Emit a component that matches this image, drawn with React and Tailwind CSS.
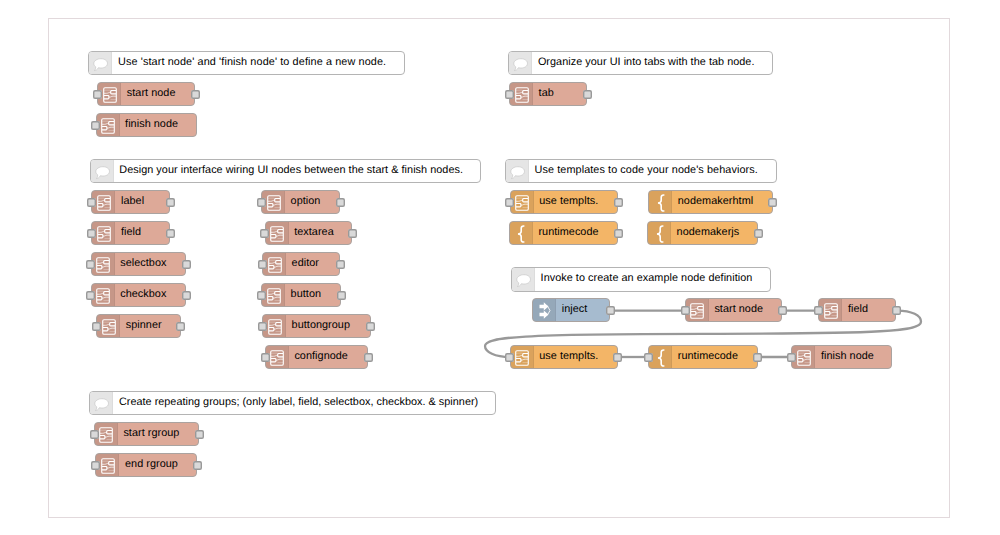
import React from "react";

const COMMENTS = [
  { x: 88.4, r: 405, y: 51, text: "Use 'start node' and 'finish node' to define a new node.", tracking: "tracking-[0.11px]" },
  { x: 508.3, r: 773.2, y: 51, text: "Organize your UI into tabs with the tab node." },
  { x: 89.7, r: 480.8, y: 159.3, text: "Design your interface wiring UI nodes between the start & finish nodes." },
  { x: 505, r: 776.5, y: 159.3, text: "Use templates to code your node's behaviors.", tracking: "tracking-[0.08px]" },
  { x: 511, r: 770.7, y: 267.4, text: "Invoke to create an example node definition" },
  { x: 89.3, r: 496.5, y: 391, text: "Create repeating groups; (only label, field, selectbox, checkbox. & spinner)", tracking: "tracking-[0.025px]" },
];

const NODES = [
  { x: 97.2, r: 195, y: 82, text: "start node", input: true, output: true },
  { x: 95.5, r: 196.8, y: 113, text: "finish node", input: true },
  { x: 91.4, r: 170, y: 190.2, text: "label", input: true, output: true },
  { x: 91.4, r: 170, y: 221.2, text: "field", input: true, output: true },
  { x: 90.6, r: 186.2, y: 252.2, text: "selectbox", input: true, output: true },
  { x: 90.6, r: 186.4, y: 283.2, text: "checkbox", input: true, output: true },
  { x: 96.2, r: 180.6, y: 314, text: "spinner", input: true, output: true },
  { x: 261, r: 340.4, y: 190.2, text: "option", input: true, output: true },
  { x: 264.6, r: 352.2, y: 221.2, text: "textarea", input: true, output: true },
  { x: 262, r: 340, y: 252.2, text: "editor", input: true, output: true },
  { x: 261, r: 341, y: 283.2, text: "button", input: true, output: true },
  { x: 262, r: 370.5, y: 314, text: "buttongroup", input: true, output: true },
  { x: 264.8, r: 367.8, y: 345, text: "confignode", input: true, output: true },
  { x: 93.8, r: 198.8, y: 422, text: "start rgroup", input: true, output: true },
  { x: 95.4, r: 197.2, y: 453, text: "end rgroup", input: true, output: true },
  { x: 509, r: 587.2, y: 82, text: "tab", input: true, output: true },
  { x: 509.6, r: 617.8, y: 190.2, text: "use templts.", color: "orange", input: true, output: true },
  { x: 508.8, r: 618.4, y: 221.2, text: "runtimecode", color: "orange", icon: "brace", output: true },
  { x: 648.2, r: 772.6, y: 190.2, text: "nodemakerhtml", color: "orange", icon: "brace", output: true },
  { x: 647, r: 758, y: 221.2, text: "nodemakerjs", color: "orange", icon: "brace", output: true },
  { x: 532.2, r: 610.4, y: 298.3, text: "inject", color: "blue", icon: "arrow", output: true },
  { x: 684.8, r: 782.4, y: 298.3, text: "start node", input: true, output: true },
  { x: 818.3, r: 896.3, y: 298.3, text: "field", input: true, output: true },
  { x: 509.6, r: 617.6, y: 345, text: "use templts.", color: "orange", input: true, output: true },
  { x: 648.2, r: 757.6, y: 345, text: "runtimecode", color: "orange", icon: "brace", input: true, output: true },
  { x: 791.3, r: 892.4, y: 345, text: "finish node", input: true },
];

const WIRES = [
  "M610.5 310.6H685",
  "M782.5 310.6H818",
  "M617.5 357H648",
  "M757.5 357H791",
  "M897 310.6C912 310.6 921 315.5 921 321.7C921 331 885 333.8 703 333.8C521 333.8 485 337 485 346C485 352 495 357 510 357",
];

const FILLS = {
  pink: "bg-[#dda998]",
  orange: "bg-[#f3b567]",
  blue: "bg-[#a6bbcf]",
};

function SubflowIcon() {
  return (
    <svg className="h-4 w-3.5" viewBox="0 0 14 16" fill="none" stroke="white">
      <rect x="0.7" y="0.7" width="12.6" height="14.6" rx="1.3" strokeWidth="1.1" />
      <path d="M1 3.2H7M7.5 12.6H13" strokeWidth="0.7" opacity="0.4" />
      <path
        d="M13 3.5H8.6Q7.7 3.5 7.7 4.4V6Q7.7 6.9 8.6 6.9H13M1 8.5H5Q5.9 8.5 5.9 9.4V11Q5.9 11.9 5 11.9H1"
        strokeWidth="1.15"
      />
      <path d="M7.7 5.3C5.4 5.3 5.4 6.3 3.4 6.3H1M5.9 10.2C8.2 10.2 8.2 9.2 10.2 9.2H13" strokeWidth="0.9" opacity="0.8" />
    </svg>
  );
}

function BraceIcon() {
  return (
    <svg className="h-[18px] w-2.5" viewBox="0 0 10 18" fill="none" stroke="white" strokeWidth="1.6">
      <path d="M8.4 1H7.6Q5.2 1 5.2 3.3V6.2Q5.2 8.8 2 9Q5.2 9.2 5.2 11.8V14.7Q5.2 17 7.6 17H8.4" />
    </svg>
  );
}

function ArrowIcon() {
  return (
    <svg className="ml-px h-[17px] w-3" viewBox="0 0 12 17" fill="white">
      <path d="M0.5 2.7H4.8V0.3L9.4 4.5L4.8 8.6V6.3H0.5Z" />
      <path d="M0.5 10.7H4.8V8.4L9.4 12.5L4.8 16.7V14.3H0.5Z" />
      <path d="M8.2 3.6L11 8.5L8.2 13.4" fill="none" stroke="white" strokeWidth="0.9" />
    </svg>
  );
}

function BubbleIcon() {
  return (
    <svg className="h-[15px] w-[15px]" viewBox="0 0 14 14">
      <path
        d="M7.4 1.6C10.9 1.6 13.5 3.5 13.5 6S10.9 10.3 7.4 10.3C6.5 10.3 5.7 10.2 5 10C4.2 11.6 3 12.4 1.3 12.7C2.3 11.6 2.6 10.5 2.5 9.2C1.3 8.4.8 7.3.8 6C.8 3.5 3.9 1.6 7.4 1.6Z"
        fill="white"
        stroke="#c4c4c4"
        strokeWidth="0.6"
      />
    </svg>
  );
}

const ICONS = { subflow: SubflowIcon, brace: BraceIcon, arrow: ArrowIcon };

function Port({ side }) {
  return (
    <span
      className={
        "absolute top-[7px] size-[9px] rounded-[2.3px] bg-[#d9d9d9] shadow-[inset_0_0_0_1.4px_#999] " +
        (side === "left" ? "-left-[5.2px]" : "-right-[5.8px]")
      }
    />
  );
}

function Node({ x, r, y, text, color = "pink", icon = "subflow", input, output }) {
  const Icon = ICONS[icon];
  return (
    <div
      className={"absolute flex h-[24.2px] rounded-[4px] border border-[#aaa3a0] " + FILLS[color]}
      style={{ left: x, top: y, width: r - x }}
    >
      <div className="flex w-[23px] shrink-0 items-center justify-center rounded-l-[3px] border-r border-black/5 bg-black/10 pl-px pt-px">
        <Icon />
      </div>
      <span className="pl-[5.6px] leading-[20px] tracking-[0.05px]">{text}</span>
      {input && <Port side="left" />}
      {output && <Port side="right" />}
    </div>
  );
}

function Comment({ x, r, y, text, tracking = "tracking-[0.045px]" }) {
  return (
    <div
      className="absolute flex h-[24.2px] rounded-[4px] border border-[#b4b4b4] bg-white"
      style={{ left: x, top: y, width: r - x }}
    >
      <div className="flex w-[23px] shrink-0 items-center justify-center rounded-l-[3px] border-r border-[#dcdcdc] bg-[#e5e5e5] pl-px pt-0.5">
        <BubbleIcon />
      </div>
      <span className={"pl-[5.6px] leading-[20px] " + tracking}>{text}</span>
    </div>
  );
}

export default function App() {
  return (
    <main className="relative h-[535px] w-[1000px] overflow-hidden bg-white px-12 pt-[18px] font-['Liberation_Sans',Arial,sans-serif] text-[10.85px] whitespace-nowrap text-black [text-rendering:geometricPrecision]">
      <div className="h-[500px] w-[902px] border border-[#e2d9dc]" />
      <svg className="absolute inset-0 h-[535px] w-[1000px]" viewBox="0 0 1000 535" fill="none">
        {WIRES.map((d) => (
          <path key={d} d={d} stroke="#999" strokeWidth="2.3" />
        ))}
      </svg>
      {COMMENTS.map((c) => (
        <Comment key={c.text} {...c} />
      ))}
      {NODES.map((n) => (
        <Node key={`${n.x}-${n.y}`} {...n} />
      ))}
    </main>
  );
}
